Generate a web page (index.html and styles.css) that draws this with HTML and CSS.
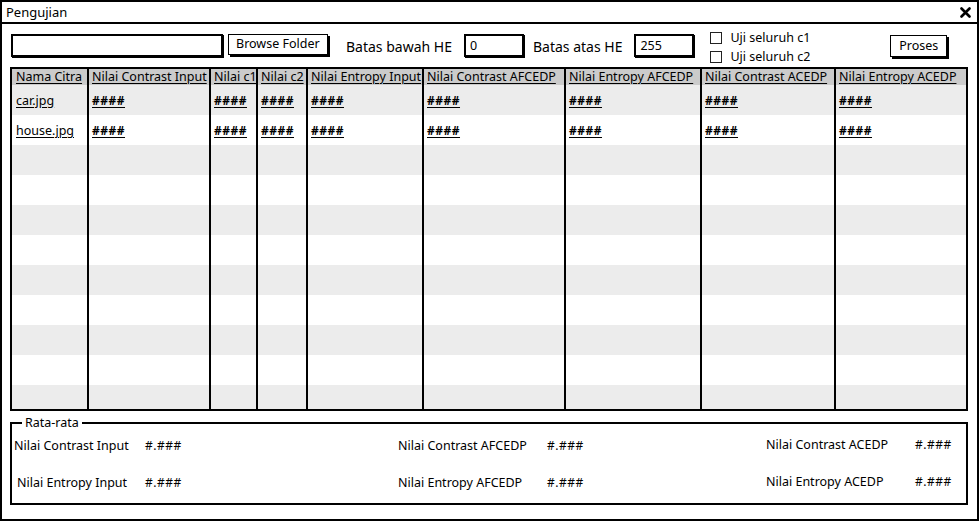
FILE: index.html
```html
<!DOCTYPE html>
<html>
<head>
<meta charset="utf-8">
<link rel="stylesheet" href="styles.css">
</head>
<body>
<div class="window">
  <div class="titlebar">
    <span class="title">Pengujian</span>
    <svg class="close" width="11" height="11" viewBox="0 0 11 11"><path d="M1.5 1.5 L9.5 9.5 M9.5 1.5 L1.5 9.5" stroke="#000" stroke-width="2.6" stroke-linecap="round"/></svg>
  </div>
  <div class="toolbar">
    <div class="field path"></div>
    <div class="btn browse">Browse Folder</div>
    <span class="lbl lbl-bawah">Batas bawah HE</span>
    <div class="field num">0</div>
    <span class="lbl lbl-atas">Batas atas HE</span>
    <div class="field num">255</div>
    <div class="checks">
      <div class="check"><span class="box"></span>Uji seluruh c1</div>
      <div class="check"><span class="box"></span>Uji seluruh c2</div>
    </div>
    <div class="btn proses">Proses</div>
  </div>
  <div class="table">
    <div class="row head">
      <div class="c"><u>Nama Citra</u></div>
      <div class="c"><u>Nilai Contrast Input</u></div>
      <div class="c"><u>Nilai c1</u></div>
      <div class="c"><u>Nilai c2</u></div>
      <div class="c"><u>Nilai Entropy Input</u></div>
      <div class="c"><u>Nilai Contrast AFCEDP</u></div>
      <div class="c"><u>Nilai Entropy AFCEDP</u></div>
      <div class="c"><u>Nilai Contrast ACEDP</u></div>
      <div class="c"><u>Nilai Entropy ACEDP</u></div>
    </div>
    <div class="row odd">
      <div class="c"><u>car.jpg</u></div>
      <div class="c h"><u>####</u></div>
      <div class="c h"><u>#### </u></div>
      <div class="c h"><u>####</u></div>
      <div class="c h"><u>####</u></div>
      <div class="c h"><u>####</u></div>
      <div class="c h"><u>####</u></div>
      <div class="c h"><u>####</u></div>
      <div class="c h"><u>####</u></div>
    </div>
    <div class="row">
      <div class="c"><u>house.jpg</u></div>
      <div class="c h"><u>####</u></div>
      <div class="c h"><u>####</u></div>
      <div class="c h"><u>####</u></div>
      <div class="c h"><u>####</u></div>
      <div class="c h"><u>####</u></div>
      <div class="c h"><u>####</u></div>
      <div class="c h"><u>####</u></div>
      <div class="c h"><u>####</u></div>
    </div>
    <div class="row odd"><div class="c"></div><div class="c"></div><div class="c"></div><div class="c"></div><div class="c"></div><div class="c"></div><div class="c"></div><div class="c"></div><div class="c"></div></div>
    <div class="row"><div class="c"></div><div class="c"></div><div class="c"></div><div class="c"></div><div class="c"></div><div class="c"></div><div class="c"></div><div class="c"></div><div class="c"></div></div>
    <div class="row odd"><div class="c"></div><div class="c"></div><div class="c"></div><div class="c"></div><div class="c"></div><div class="c"></div><div class="c"></div><div class="c"></div><div class="c"></div></div>
    <div class="row"><div class="c"></div><div class="c"></div><div class="c"></div><div class="c"></div><div class="c"></div><div class="c"></div><div class="c"></div><div class="c"></div><div class="c"></div></div>
    <div class="row odd"><div class="c"></div><div class="c"></div><div class="c"></div><div class="c"></div><div class="c"></div><div class="c"></div><div class="c"></div><div class="c"></div><div class="c"></div></div>
    <div class="row"><div class="c"></div><div class="c"></div><div class="c"></div><div class="c"></div><div class="c"></div><div class="c"></div><div class="c"></div><div class="c"></div><div class="c"></div></div>
    <div class="row odd"><div class="c"></div><div class="c"></div><div class="c"></div><div class="c"></div><div class="c"></div><div class="c"></div><div class="c"></div><div class="c"></div><div class="c"></div></div>
    <div class="row"><div class="c"></div><div class="c"></div><div class="c"></div><div class="c"></div><div class="c"></div><div class="c"></div><div class="c"></div><div class="c"></div><div class="c"></div></div>
    <div class="row odd"><div class="c"></div><div class="c"></div><div class="c"></div><div class="c"></div><div class="c"></div><div class="c"></div><div class="c"></div><div class="c"></div><div class="c"></div></div>
  </div>
  <fieldset class="group">
    <legend>Rata-rata</legend>
    <div class="avg">
      <span>Nilai Contrast Input</span><span class="v">#.###</span>
      <span>Nilai Contrast AFCEDP</span><span class="v">#.###</span>
      <span class="up">Nilai Contrast ACEDP</span><span class="v up">#.###</span>
      <span class="ind">Nilai Entropy Input</span><span class="v">#.###</span>
      <span>Nilai Entropy AFCEDP</span><span class="v">#.###</span>
      <span class="up">Nilai Entropy ACEDP</span><span class="v up">#.###</span>
    </div>
  </fieldset>
</div>
</body>
</html>
```

FILE: styles.css
```css
* { box-sizing: border-box; }
html, body { margin: 0; padding: 0; background: #fff; }
body {
  font-family: "Noto Sans", "Open Sans", sans-serif;
  font-size: 12.5px;
  color: #000;
}
.window {
  width: 979px;
  height: 521px;
  border: 2px solid #000;
  overflow: hidden;
}
.titlebar {
  height: 22px;
  border-bottom: 2px solid #000;
  display: flex;
  align-items: center;
  justify-content: space-between;
  padding: 0 6px 0 4px;
}
.title { line-height: 20px; font-size: 13px; }
.toolbar {
  display: flex;
  align-items: flex-start;
  height: 43px;
  padding: 7px 0 0 9px;
}
.field {
  height: 23px;
  border: 2px solid #000;
  box-shadow: 1px 1px 0 #000;
  padding: 1px 4px;
  line-height: 17px;
  margin-top: 3px;
}
.path { width: 212px; }
.btn {
  border: 1.5px solid #000;
  box-shadow: 2px 2px 0 #000;
  height: 21px;
  line-height: 18px;
  padding: 0 7px;
  margin-top: 3px;
  background: #fff;
}
.browse { margin-left: 5px; width: 100px; }
.lbl { line-height: 23px; margin-top: 4px; font-size: 14px; }
.lbl-bawah { margin-left: 18px; margin-right: 12px; }
.num { width: 60px; }
.lbl-atas { margin-left: 9px; margin-right: 12px; }
.checks {
  margin-left: 16px;
  display: flex;
  flex-direction: column;
  gap: 2px;
  margin-top: -2px;
}
.check { display: flex; align-items: center; height: 17px; }
.box {
  width: 12px;
  height: 12px;
  border: 1.5px solid #222;
  margin-right: 8px;
}
.proses { margin-left: 80px; margin-top: 4px; width: 57px; height: 22px; line-height: 19px; padding: 0; text-align: center; }
.table {
  margin-left: 8px;
  width: 958px;
  height: 344px;
  border: 2px solid #000;
  overflow: hidden;
  background: #fff;
}
.row {
  display: grid;
  grid-template-columns: 75px 122px 47px 50px 116px 142px 136px 134px 132px;
  height: 30px;
}
.row .c {
  border-left: 2px solid #000;
  padding: 0 3px 0 3px;
  display: flex;
  align-items: center;
  white-space: nowrap;
  overflow: hidden;
}
.row .c:first-child { border-left: none; padding-left: 4px; }
.row.head { height: 16px; background: #cbcbcb; }
.row.head .c { align-items: flex-start; line-height: 15px; }
.row.odd { background: #ececec; }
.row .c.h { font-weight: bold; letter-spacing: 0.5px; font-size: 12px; }
u { text-decoration-thickness: 1px; text-underline-offset: 2px; }
.group {
  margin: 6px 0 0 8px;
  width: 958px;
  height: 88px;
  border: 2px solid #000;
  padding: 0;
}
.group legend {
  margin-left: 10px;
  padding: 0 3px;
  line-height: 12px;
}
.avg {
  display: grid;
  grid-template-columns: 131px 253px 149px 219px 149px 50px;
  grid-template-rows: 37px 37px;
  align-items: center;
  padding: 0 0 0 2px;
  margin-top: -2px;
}
.avg .v { font-size: 12px; letter-spacing: 0.5px; }
.avg .ind { padding-left: 3px; }
.avg .up { position: relative; top: -1px; }
```
